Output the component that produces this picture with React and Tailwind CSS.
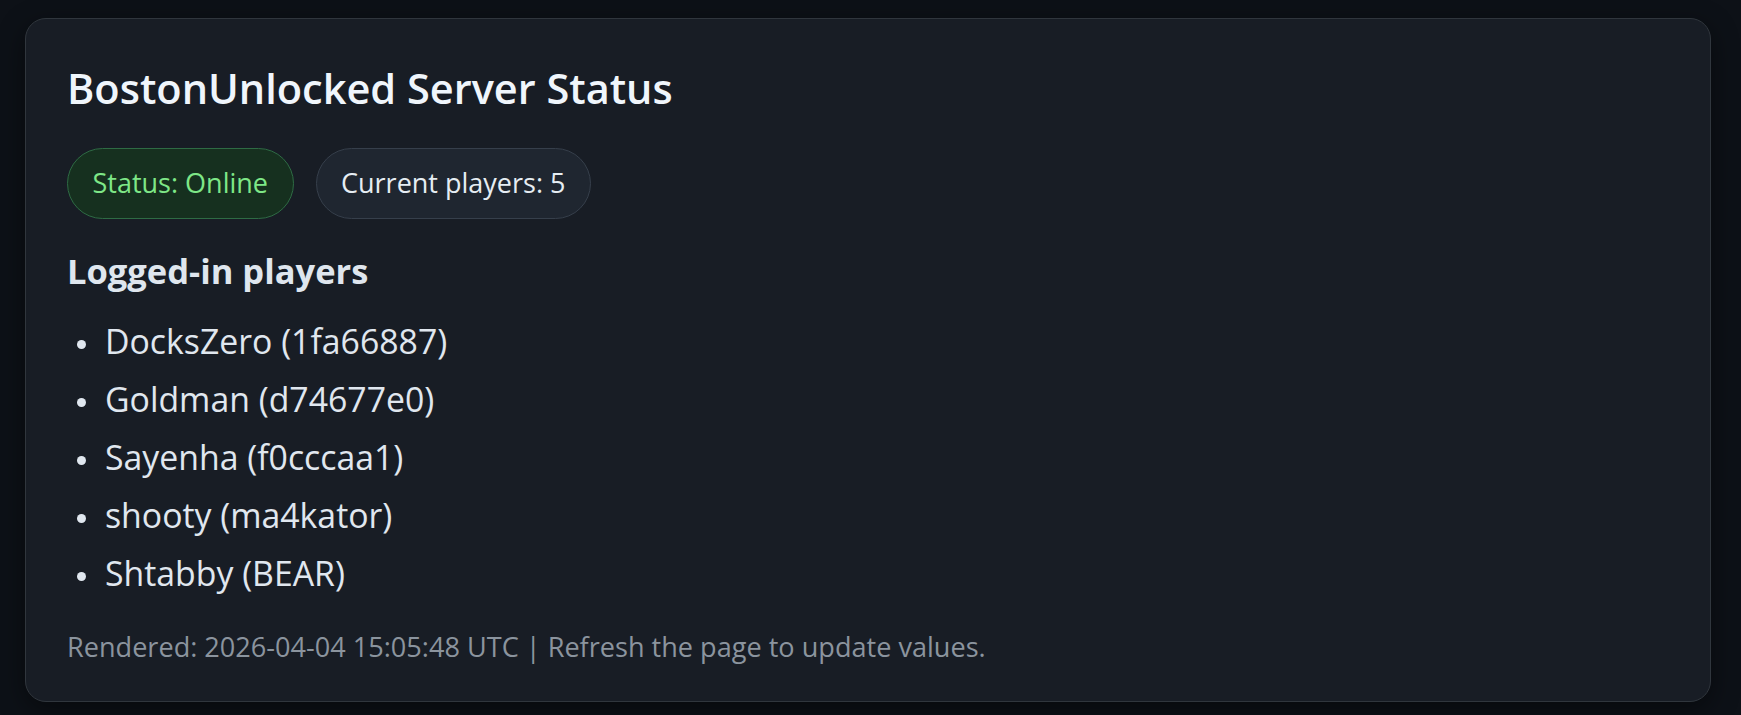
export default function App() {
  const players = [
    "DocksZero (1fa66887)",
    "Goldman (d74677e0)",
    "Sayenha (f0cccaa1)",
    "shooty (ma4kator)",
    "Shtabby (BEAR)",
  ];
  return (
    <div className="min-h-[715px] w-full bg-[#0d1117] pt-[18px] pl-[25px] pb-[15px] font-['Open_Sans','Noto_Sans',sans-serif]">
      <div className="w-[1686px] rounded-[21px] border border-[#30363d] bg-[#181d25] px-[41px] pt-[44px] pb-[36px] shadow-[0_8px_28px_rgba(0,0,0,0.45)]">
        <h1 className="text-[41.5px] leading-[50px] font-semibold text-[#f0f6fc]">
          BostonUnlocked Server Status
        </h1>
        <div className="mt-[34.5px] flex gap-[22px]">
          <span className="flex h-[71px] items-center rounded-full border border-[#2e6b44] bg-[#16301f] px-[24.5px] text-[27px] text-[#7ee787]">
            Status: Online
          </span>
          <span className="flex h-[71px] items-center rounded-full border border-[#363f4b] bg-[#1f2630] px-[24.5px] text-[27px] text-[#e6edf3]">
            Current players: 5
          </span>
        </div>
        <h2 className="mt-[32.5px] text-[34.5px] leading-[40px] font-bold text-[#dfe6ee]">
          Logged-in players
        </h2>
        <ul className="mt-[20.5px] list-none">
          {players.map((p) => (
            <li key={p} className="flex h-[58px] items-center text-[33.8px] text-[#e0e7ef]">
              <span className="ml-[10px] mr-[19px] mt-[7px] h-[9px] w-[9px] shrink-0 rounded-full bg-[#e0e7ef]" />
              <span className="leading-[58px]">{p}</span>
            </li>
          ))}
        </ul>
        <p className="mt-[27px] text-[27.1px] leading-[36px] text-[#8b949e]">
          Rendered: 2026-04-04 15:05:48 UTC | Refresh the page to update values.
        </p>
      </div>
    </div>
  );
}
